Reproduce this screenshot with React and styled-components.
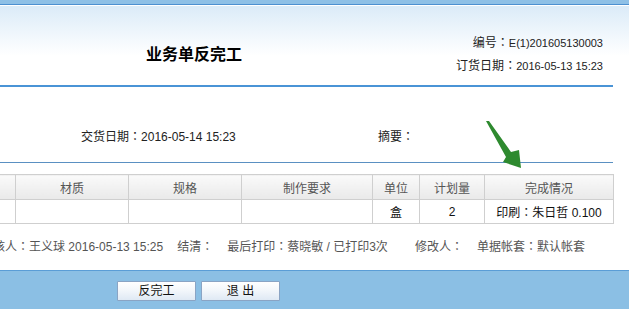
import React from "react";
import styled, { createGlobalStyle } from "styled-components";

const Global = createGlobalStyle`
  html, body { margin: 0; padding: 0; background: #fff; }
  body { font-family: "Liberation Sans", "Noto Sans CJK SC", sans-serif; font-size: 12px; }
`;

const Root = styled.div`
  position: relative;
  width: 629px;
  height: 311px;
  overflow: hidden;
  background: #fff;
  color: #222;
`;

const Colon = styled.span`
  font-family: "Noto Sans CJK TC", sans-serif;
  font-size: 12px;
`;

const Small = styled.span`
  font-size: 11px;
`;

function Txt({ children }) {
  const parts = String(children).split("：");
  return (
    <>
      {parts.map((p, i) => (
        <React.Fragment key={i}>
          {i > 0 && <Colon>：</Colon>}
          {p}
        </React.Fragment>
      ))}
    </>
  );
}

const TopBand = styled.div`
  height: 4px;
  background: #8ec0e6;
  border-bottom: 1px solid #4d90d0;
`;

const HeaderBg = styled.div`
  border-top: 1px solid #fff;
  background: linear-gradient(to bottom, #dbebf8 0px, #f4f9fd 34px, #ffffff 50px);
`;

const Inner = styled.div`
  margin-left: -225px;
  width: 838px;
`;

const HeaderGrid = styled(Inner)`
  display: grid;
  grid-template-columns: 1fr auto 1fr;
  align-items: start;
  height: 81px;
  box-sizing: border-box;
  padding-top: 25px;
  border-bottom: 2px solid #4a94d6;
`;

const Title = styled.h1`
  grid-column: 2;
  margin: 12px 0 0;
  font-size: 16px;
  line-height: 20px;
  font-weight: 700;
  color: #000;
  font-family: "Noto Sans CJK SC", sans-serif;
`;

const MetaBox = styled.div`
  grid-column: 3;
  justify-self: end;
  margin-right: 10px;
  text-align: right;
`;

const MetaLine = styled.div`
  line-height: 22px;
  color: #222;
  white-space: nowrap;
`;

const InfoRow = styled(Inner)`
  display: flex;
  height: 76px;
  box-sizing: border-box;
  padding: 39px 0 0 306px;
  border-bottom: 1px solid #5a90c2;
`;

const InfoItem = styled.div`
  width: ${(p) => p.$w || "auto"};
  line-height: 20px;
  color: #222;
  white-space: nowrap;
`;

const TableWrap = styled(Inner)`
  margin-top: 11px;
`;

const Table = styled.table`
  width: 838px;
  table-layout: fixed;
  border-collapse: collapse;
`;

const Th = styled.th`
  height: 24px;
  padding: 0;
  border: 1px solid #cfcfcf;
  background: linear-gradient(to bottom, #fafafa, #e9e9e9);
  color: #555;
  font-weight: 400;
  font-size: 12px;
  text-align: center;
  white-space: nowrap;
`;

const Td = styled.td`
  height: 23px;
  padding: 0;
  border: 1px solid #cfcfcf;
  color: #111;
  font-size: 12px;
  text-align: center;
  white-space: nowrap;
`;

const Footer = styled(Inner)`
  display: flex;
  margin-top: 12px;
  padding-left: 206px;
  box-sizing: border-box;
  line-height: 20px;
  color: #555;
  white-space: nowrap;
`;

const FootItem = styled.span`
  margin-right: ${(p) => p.$gap || 14}px;
`;

const BottomBar = styled.div`
  margin-top: 13px;
  height: 39px;
  box-sizing: border-box;
  border-top: 1px solid #5a9dd6;
  background: #8bbfe4;
`;

const ButtonRow = styled(Inner)`
  display: flex;
  justify-content: center;
  gap: 5px;
  padding: 10px 0 0 9px;
  box-sizing: border-box;
`;

const Button = styled.button`
  width: 79px;
  height: 20px;
  padding: 0;
  border: 1px solid #8aa4c4;
  border-radius: 1px;
  background: linear-gradient(to bottom, #ffffff 0%, #f3f7fb 45%, #dfe9f4 100%);
  font-family: "Liberation Sans", "Noto Sans CJK SC", sans-serif;
  font-size: 12px;
  line-height: 18px;
  color: #111;
  cursor: pointer;
`;

const Arrow = styled.svg`
  position: absolute;
  left: 480px;
  top: 115px;
`;

const cols = [60, 180, 113, 113, 131, 47, 65, 129];
const heads = ["", "", "材质", "规格", "制作要求", "单位", "计划量", "完成情况"];
const row = ["", "", "", "", "", "盒", "2", "印刷：朱日哲 0.100"];

export default function App() {
  return (
    <Root>
      <Global />
      <TopBand />
      <HeaderBg>
        <HeaderGrid>
          <Title>业务单反完工</Title>
          <MetaBox>
            <MetaLine>
              编号<Colon>：</Colon>
              <Small>E(1)201605130003</Small>
            </MetaLine>
            <MetaLine>
              订货日期<Colon>：</Colon>
              <Small>2016-05-13 15:23</Small>
            </MetaLine>
          </MetaBox>
        </HeaderGrid>
      </HeaderBg>
      <InfoRow>
        <InfoItem $w="297px">
          <Txt>交货日期：2016-05-14 15:23</Txt>
        </InfoItem>
        <InfoItem>
          <Txt>摘要：</Txt>
        </InfoItem>
      </InfoRow>
      <TableWrap>
        <Table>
          <colgroup>
            {cols.map((w, i) => (
              <col key={i} style={{ width: w }} />
            ))}
          </colgroup>
          <thead>
            <tr>
              {heads.map((h, i) => (
                <Th key={i}>{h}</Th>
              ))}
            </tr>
          </thead>
          <tbody>
            <tr>
              {row.map((c, i) => (
                <Td key={i}>
                  <Txt>{c}</Txt>
                </Td>
              ))}
            </tr>
          </tbody>
        </Table>
      </TableWrap>
      <Footer>
        <FootItem>
          <Txt>审核人：王义球 2016-05-13 15:25</Txt>
        </FootItem>
        <FootItem>
          <Txt>结清：</Txt>
        </FootItem>
        <FootItem $gap={27}>
          <Txt>最后打印：蔡晓敏 / 已打印3次</Txt>
        </FootItem>
        <FootItem>
          <Txt>修改人：</Txt>
        </FootItem>
        <FootItem>
          <Txt>单据帐套：默认帐套</Txt>
        </FootItem>
      </Footer>
      <BottomBar>
        <ButtonRow>
          <Button>反完工</Button>
          <Button>退 出</Button>
        </ButtonRow>
      </BottomBar>
      <Arrow width="50" height="60" viewBox="480 115 50 60">
        <polygon
          points="486,121 489,121 511,152 519,150 521,168 503,162 506,157"
          fill="#2e8a2f"
        />
      </Arrow>
    </Root>
  );
}
